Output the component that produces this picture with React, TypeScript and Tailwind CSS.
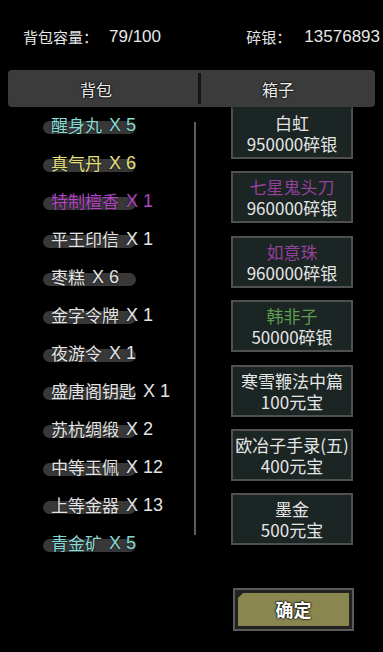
const bagItems = [
  { name: '醒身丸', count: 5, color: 'text-[#86d8d4]' },
  { name: '真气丹', count: 6, color: 'text-[#e6e07c]' },
  { name: '特制檀香', count: 1, color: 'text-[#b244c4]' },
  { name: '平王印信', count: 1, color: 'text-[#e4e4e4]' },
  { name: '枣糕', count: 6, color: 'text-[#e4e4e4]' },
  { name: '金字令牌', count: 1, color: 'text-[#e4e4e4]' },
  { name: '夜游令', count: 1, color: 'text-[#e4e4e4]' },
  { name: '盛唐阁钥匙', count: 1, color: 'text-[#e4e4e4]' },
  { name: '苏杭绸缎', count: 2, color: 'text-[#e4e4e4]' },
  { name: '中等玉佩', count: 12, color: 'text-[#e4e4e4]' },
  { name: '上等金器', count: 13, color: 'text-[#e4e4e4]' },
  { name: '青金矿', count: 5, color: 'text-[#86d8d4]' },
]

const boxItems = [
  { name: '白虹', price: '950000碎银', color: 'text-[#e6e6e6]' },
  { name: '七星鬼头刀', price: '960000碎银', color: 'text-[#93409a]' },
  { name: '如意珠', price: '960000碎银', color: 'text-[#93409a]' },
  { name: '韩非子', price: '50000碎银', color: 'text-[#5f9d50]' },
  { name: '寒雪鞭法中篇', price: '100元宝', color: 'text-[#e6e6e6]' },
  { name: '欧冶子手录(五)', price: '400元宝', color: 'text-[#e6e6e6]' },
  { name: '墨金', price: '500元宝', color: 'text-[#e6e6e6]' },
]

export default function App() {
  return (
    <div className="relative w-[383px] h-[652px] overflow-hidden bg-black font-['Noto_Sans_CJK_SC','Noto_Sans',sans-serif] text-[#e6e6e6]">
      {/* top stats */}
      <div className="flex items-center justify-between pl-[23px] pr-[3px] h-[70px] pt-[4px] text-[15px]">
        <div className="flex items-center">
          <span>背包容量：</span>
          <span className="ml-[11px] text-[17px] font-['Liberation_Sans',sans-serif]">79/100</span>
        </div>
        <div className="flex items-center">
          <span>碎银：</span>
          <span className="ml-[13px] text-[17px] font-['Liberation_Sans',sans-serif]">13576893</span>
        </div>
      </div>

      {/* tabs */}
      <div className="relative z-10 mx-[8px] h-[37px] flex items-center bg-[#3b3b3b] rounded-[4px] text-[16px] text-[#ececec] [text-shadow:0_0_2px_#000,0_0_2px_#000]">
        <div className="w-[190px] flex justify-center pr-[14px]">背包</div>
        <div className="w-[3px] h-[31px] bg-[#151515]" />
        <div className="flex-1 flex justify-center pr-[20px]">箱子</div>
      </div>

      {/* body */}
      <div className="flex h-[450px] overflow-hidden">
        <div className="w-[194px] flex flex-col -mt-[1px]">
          {bagItems.map((it) => (
            <div key={it.name} className="relative h-[38px] flex items-center pl-[51px] shrink-0">
              <div className="absolute left-[43px] top-[15px] w-[93px] h-[13px] rounded-full bg-[#383838] blur-[0.6px]" />
              <span className={`relative flex items-center text-[17px] ${it.color} [text-shadow:0_0_2px_rgba(0,0,0,0.9)]`}>
                {it.name}
                <span className="ml-[7px] text-[18px] font-['Liberation_Sans',sans-serif]">X</span>
                <span className="ml-[5px] text-[18px] font-['Liberation_Sans',sans-serif]">{it.count}</span>
              </span>
            </div>
          ))}
        </div>
        <div className="w-[2px] mt-[15px] h-[413px] bg-[#5c5c5c]" />
        <div className="ml-[35px] w-[122px] flex flex-col gap-[12.4px]">
          {boxItems.map((it, i) => (
            <div
              key={it.name}
              className={`h-[52px] shrink-0 border-2 border-[#505050] bg-[#1b2523] flex flex-col items-center justify-center text-[17px] leading-[21px] whitespace-nowrap ${i === 0 ? 'border-t-transparent' : ''}`}
            >
              <span className={it.color}>{it.name}</span>
              <span className="text-[#e6e6e6]">{it.price}</span>
            </div>
          ))}
        </div>
      </div>

      {/* confirm */}
      <div className="flex pl-[233px] mt-[31px]">
        <div className="w-[121px] h-[43px] border-2 border-[#5a5a5a] bg-[#222] p-[3px]">
          <div className="relative h-full bg-[#8a8650] flex items-center justify-center text-[18px] font-bold text-white [text-shadow:0_0_2px_#000,0_0_2px_#000,0_0_1px_#000]">
            <div className="absolute left-0 top-0 w-0 h-0 border-t-[5px] border-t-[#222] border-r-[5px] border-r-transparent" />
            确定
          </div>
        </div>
      </div>
    </div>
  )
}
